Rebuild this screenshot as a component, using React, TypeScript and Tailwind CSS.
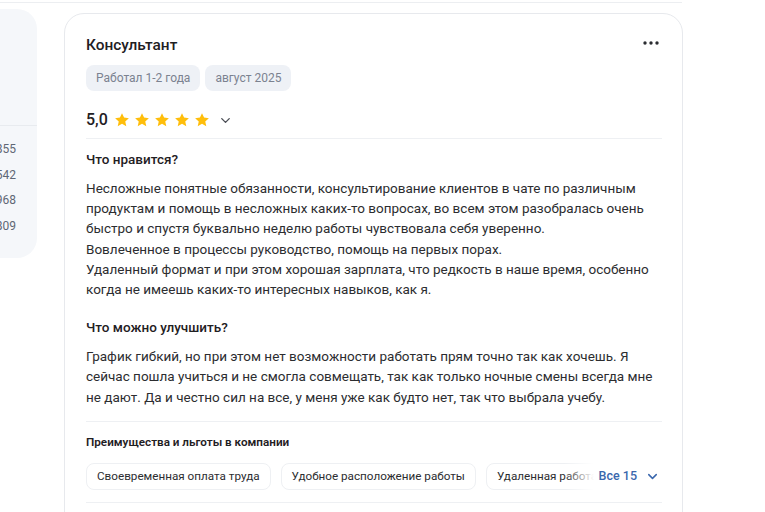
import { ChevronDown } from 'lucide-react';

const likes = [
    'Несложные понятные обязанности, консультирование клиентов в чате по различным продуктам и помощь в несложных каких-то вопросах, во всем этом разобралась очень быстро и спустя буквально неделю работы чувствовала себя уверенно.',
    'Вовлеченное в процессы руководство, помощь на первых порах.',
    'Удаленный формат и при этом хорошая зарплата, что редкость в наше время, особенно когда не имеешь каких-то интересных навыков, как я.',
];

const perks = ['Своевременная оплата труда', 'Удобное расположение работы', 'Удаленная работа', 'Гибкий график'];

const Star = () => (
    <svg width="16" height="16" viewBox="0 0 24 24" className="fill-[#ffbe0b]">
        <path d="M12 1.8l3.1 6.6 7.2.8-5.4 4.9 1.5 7.1L12 17.6l-6.4 3.6 1.5-7.1L1.7 9.2l7.2-.8z" />
    </svg>
);

export default function App() {
    return (
        <div className="w-[765px] h-[512px] overflow-hidden bg-white text-[#1f2023]" style={{ fontFamily: 'Roboto, "Noto Sans", sans-serif' }}>
            <div className="h-px w-[682px] mt-[2px] bg-[#eceef1]" />
            <div className="flex gap-[27px] mt-[6px]">
                {/* left panel (cut off) */}
                <aside className="shrink-0 ml-[-163px] w-[200px] h-[249px] rounded-[20px] bg-[#f5f7fa] flex flex-col">
                    <div className="h-[116px]" />
                    <div className="h-px bg-[#e8ebef]" />
                    <div className="flex flex-col items-end pr-[21px] pt-[15px] gap-[9.5px] text-[12px] leading-[16.2px] text-[#5f6775]">
                        <span>1 855</span>
                        <span>1 542</span>
                        <span>2 968</span>
                        <span>1 809</span>
                    </div>
                </aside>

                <article className="mt-[4px] w-[619px] h-[520px] shrink-0 rounded-t-[20px] border border-[#e7e9ed] pl-[21px] pr-[20px] pt-[19px]">
                    <div className="flex items-center justify-between">
                        <h2 className="text-[15.4px] leading-[24px] font-medium">Консультант</h2>
                        <svg width="18" height="6" viewBox="0 0 18 6" className="mr-[2px] mt-[-4px] fill-[#2a2c30]">
                            <circle cx="3" cy="3" r="1.7" />
                            <circle cx="9" cy="3" r="1.7" />
                            <circle cx="15" cy="3" r="1.7" />
                        </svg>
                    </div>
                    <div className="flex gap-[5px] mt-[8px]">
                        <span className="h-[26px] px-[10px] rounded-[8px] bg-[#eef1f6] text-[12px] leading-[26px] text-[#7b8290]">Работал 1-2 года</span>
                        <span className="h-[26px] px-[10px] rounded-[8px] bg-[#eef1f6] text-[12px] leading-[26px] text-[#7b8290]">август 2025</span>
                    </div>

                    <div className="flex items-center mt-[17px] h-[24px]">
                        <span className="text-[16px] font-medium mr-[6px]">5,0</span>
                        <div className="flex gap-[4px]">
                            <Star /><Star /><Star /><Star /><Star />
                        </div>
                        <ChevronDown size={15} strokeWidth={2.2} className="ml-[8px] text-[#4b4e55]" />
                    </div>
                    <div className="h-px bg-[#eef0f3] mt-[6px]" />

                    <h3 className="mt-[10px] text-[13.5px] leading-[20px] font-medium">Что нравится?</h3>
                    <div className="mt-[9px] text-[13.5px] leading-[20.2px] text-[#2c2d30]">
                        {likes.map((t, i) => <p key={i}>{t}</p>)}
                    </div>

                    <h3 className="mt-[18px] text-[13.5px] leading-[20px] font-medium">Что можно улучшить?</h3>
                    <p className="mt-[9px] text-[13.5px] leading-[20.2px] text-[#2c2d30]">
                        График гибкий, но при этом нет возможности работать прям точно так как хочешь. Я сейчас пошла учиться и не смогла совмещать, так как только ночные смены всегда мне не дают. Да и честно сил на все, у меня уже как будто нет, так что выбрала учебу.
                    </p>
                    <div className="h-px bg-[#eef0f3] mt-[14px]" />

                    <h4 className="mt-[12px] text-[11.7px] leading-[16px] font-semibold">Преимущества и льготы в компании</h4>
                    <div className="flex items-center mt-[13px]">
                        <div className="relative flex-1 overflow-hidden flex gap-[10px]">
                            {perks.map(p => (
                                <span key={p} className="shrink-0 h-[27px] px-[10px] rounded-[8px] border border-[#eef0f3] text-[11.7px] leading-[25px] text-[#2c2d30]">{p}</span>
                            ))}
                            <div className="absolute right-0 top-0 h-full w-[30px] bg-gradient-to-r from-white/0 to-white" />
                        </div>
                        <button className="ml-[5px] flex items-center gap-[8px] text-[12.5px] font-medium text-[#3a67ad]">
                            Все 15
                            <ChevronDown size={15} strokeWidth={2.4} className="text-[#3a67ad]" />
                        </button>
                        <div className="w-[2px]" />
                    </div>
                    <div className="h-px bg-[#eef0f3] mt-[12px]" />
                </article>
            </div>
        </div>
    );
}
